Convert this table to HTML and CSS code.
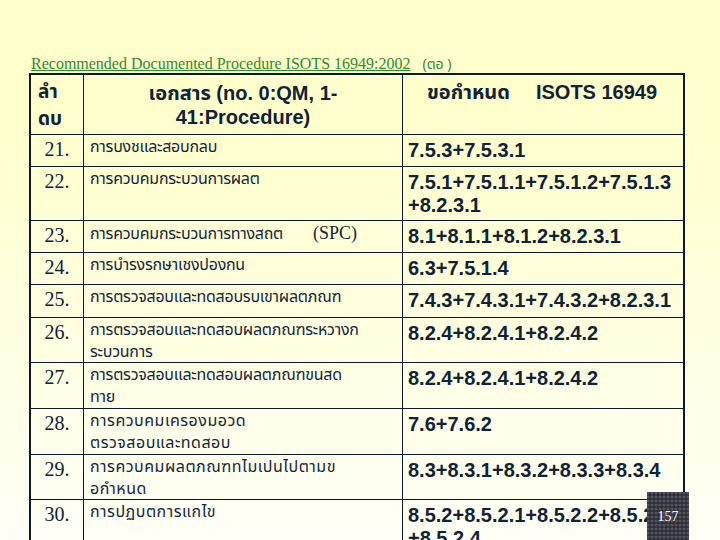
FILE: index.html
```html
<!DOCTYPE html>
<html lang="th">
<head>
<meta charset="utf-8">
<title>Recommended Documented Procedure ISOTS 16949:2002</title>
<link rel="stylesheet" href="styles.css">
</head>
<body>
<div class="slide">
  <div class="title"><span class="u">Recommended Documented Procedure ISOTS 16949:2002</span><span class="cont">(ตอ )</span></div>
  <div class="table">
    <div class="row head">
      <div class="cell c1"><div class="h1">ลำ<br>ดบ</div></div>
      <div class="cell c2"><div class="h2">เอกสาร (no. 0:QM, 1-<br>41:Procedure)</div></div>
      <div class="cell c3"><div class="h3"><span>ขอกำหนด</span><span class="iso">ISOTS 16949</span></div></div>
    </div>
    <div class="row r32">
      <div class="cell c1 num">21.</div>
      <div class="cell c2 th">การบงชและสอบกลบ</div>
      <div class="cell c3 code">7.5.3+7.5.3.1</div>
    </div>
    <div class="row r54">
      <div class="cell c1 num">22.</div>
      <div class="cell c2 th">การควบคมกระบวนการผลต</div>
      <div class="cell c3 code">7.5.1+7.5.1.1+7.5.1.2+7.5.1.3<br>+8.2.3.1</div>
    </div>
    <div class="row r32">
      <div class="cell c1 num">23.</div>
      <div class="cell c2 th">การควบคมกระบวนการทางสถต<span class="spc">(SPC)</span></div>
      <div class="cell c3 code">8.1+8.1.1+8.1.2+8.2.3.1</div>
    </div>
    <div class="row r32">
      <div class="cell c1 num">24.</div>
      <div class="cell c2 th">การบำรงรกษาเชงปองกน</div>
      <div class="cell c3 code">6.3+7.5.1.4</div>
    </div>
    <div class="row r33">
      <div class="cell c1 num">25.</div>
      <div class="cell c2 th">การตรวจสอบและทดสอบรบเขาผลตภณฑ</div>
      <div class="cell c3 code">7.4.3+7.4.3.1+7.4.3.2+8.2.3.1</div>
    </div>
    <div class="row r45">
      <div class="cell c1 num">26.</div>
      <div class="cell c2 th">การตรวจสอบและทดสอบผลตภณฑระหวางก<br>ระบวนการ</div>
      <div class="cell c3 code">8.2.4+8.2.4.1+8.2.4.2</div>
    </div>
    <div class="row r46">
      <div class="cell c1 num">27.</div>
      <div class="cell c2 th">การตรวจสอบและทดสอบผลตภณฑขนสด<br>ทาย</div>
      <div class="cell c3 code">8.2.4+8.2.4.1+8.2.4.2</div>
    </div>
    <div class="row r46">
      <div class="cell c1 num">28.</div>
      <div class="cell c2 th wide">การควบคมเครองมอวด<br>ตรวจสอบและทดสอบ</div>
      <div class="cell c3 code">7.6+7.6.2</div>
    </div>
    <div class="row r45">
      <div class="cell c1 num">29.</div>
      <div class="cell c2 th wide">การควบคมผลตภณฑทไมเปนไปตามข<br>อกำหนด</div>
      <div class="cell c3 code">8.3+8.3.1+8.3.2+8.3.3+8.3.4</div>
    </div>
    <div class="row r60">
      <div class="cell c1 num">30.</div>
      <div class="cell c2 th wide">การปฏบตการแกไข</div>
      <div class="cell c3 code">8.5.2+8.5.2.1+8.5.2.2+8.5.2.3<br>+8.5.2.4</div>
    </div>
  </div>
  <div class="badge">157</div>
</div>
</body>
</html>
```
FILE: styles.css
```css
html, body {
  margin: 0;
  padding: 0;
}
body {
  width: 720px;
  height: 540px;
  overflow: hidden;
  background: linear-gradient(to bottom, #ffffcc 0px, #ffffcc 120px, #fffff6 540px);
  color: #0f2236;
}
.slide {
  position: relative;
  width: 720px;
  height: 540px;
  padding: 55px 0 0 31px;
  box-sizing: border-box;
}
.title {
  font-family: "Liberation Serif", "Times New Roman", serif;
  font-size: 16px;
  line-height: 18px;
  height: 18px;
  color: #2f8a2f;
  white-space: nowrap;
}
.title .u {
  text-decoration: underline;
}
.title .cont {
  margin-left: 12px;
  font-family: "Noto Sans Thai", Tahoma, "DejaVu Sans", sans-serif;
  font-size: 14px;
}
.table {
  margin-left: -2px;
  width: 656px;
  box-sizing: border-box;
  border: 2px solid #0b1b2c;
  border-bottom: none;
}
.row {
  display: grid;
  grid-template-columns: 53px 319px 1fr;
  border-bottom: 1px solid #0b1b2c;
  box-sizing: border-box;
}
.head { height: 60px; }
.r32 { height: 32px; }
.r33 { height: 33px; }
.r45 { height: 45px; }
.r46 { height: 46px; }
.r54 { height: 54px; }
.r60 { height: 60px; border-bottom: none; }
.cell {
  box-sizing: border-box;
  min-width: 0;
}
.c1, .c2 {
  border-right: 1px solid #0b1b2c;
}
.h1 {
  font-family: "Noto Sans Thai", Tahoma, "DejaVu Sans", sans-serif;
  font-weight: bold;
  font-size: 19px;
  line-height: 27px;
  padding: 4px 0 0 7px;
}
.h2 {
  font-family: "Liberation Sans", Arial, "Noto Sans Thai", sans-serif;
  font-weight: bold;
  font-size: 20px;
  line-height: 24px;
  text-align: center;
  padding-top: 6px;
}
.h3 {
  font-family: "Liberation Sans", Arial, "Noto Sans Thai", sans-serif;
  font-weight: bold;
  font-size: 20px;
  line-height: 24px;
  padding: 5px 0 0 24px;
  white-space: nowrap;
}
.h3 .iso {
  margin-left: 26px;
}
.num {
  font-family: "Liberation Serif", "Times New Roman", serif;
  font-size: 20px;
  line-height: 24px;
  text-align: center;
  padding-top: 2px;
}
.th {
  font-family: "Noto Sans Thai", Tahoma, "DejaVu Sans", sans-serif;
  font-size: 16px;
  letter-spacing: -0.25px;
  line-height: 22px;
  padding: 1px 0 0 6px;
  white-space: nowrap;
  color: #13263a;
}
.th.wide {
  letter-spacing: 0.5px;
}
.spc {
  font-family: "Liberation Serif", "Times New Roman", serif;
  font-size: 18px;
  letter-spacing: 0;
  margin-left: 30px;
}
.code {
  font-family: "Liberation Sans", Arial, sans-serif;
  font-weight: bold;
  font-size: 20px;
  line-height: 23px;
  padding: 4px 0 0 5px;
  white-space: nowrap;
}
.badge {
  position: absolute;
  left: 647px;
  top: 492px;
  width: 42px;
  height: 50px;
  line-height: 50px;
  text-align: center;
  font-family: "Liberation Serif", "Times New Roman", serif;
  font-size: 14px;
  color: #ffffff;
  background-color: #3c3c48;
  background-image:
    radial-gradient(circle at 1px 1px, #55555f 1px, transparent 1.2px),
    radial-gradient(circle at 3px 3px, #2c2c36 1px, transparent 1.2px);
  background-size: 4px 4px, 4px 4px;
}
```
